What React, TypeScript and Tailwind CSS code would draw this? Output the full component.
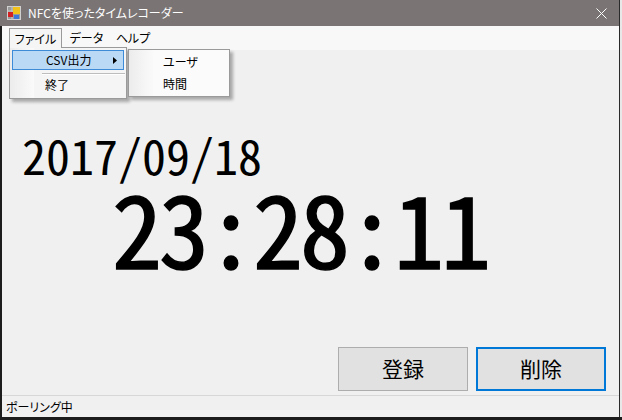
import React from 'react';

const ui = "font-['Noto_Sans_CJK_JP',sans-serif] [font-feature-settings:'palt']";
const digits = "font-['Noto_Sans_CJK_JP',sans-serif] [font-feature-settings:'hwid']";

function AppIcon() {
    return (
        <svg width="14" height="14" viewBox="0 0 14 14">
            <rect x="0.5" y="0.5" width="13" height="13" fill="#9a9a9a" stroke="#d0d0d0" />
            <line x1="0" y1="5" x2="14" y2="5" stroke="#c8c8c8" />
            <line x1="5" y1="0" x2="5" y2="14" stroke="#c8c8c8" />
            <rect x="1" y="6" width="5" height="5" fill="#d42020" />
            <rect x="6" y="1" width="7" height="7" fill="#f2c21b" />
            <rect x="7" y="9" width="5" height="4" fill="#3c78d8" />
        </svg>
    );
}

function CloseIcon() {
    return (
        <svg width="11" height="11" viewBox="0 0 11 11">
            <path d="M0.5 0.5 L10.5 10.5 M10.5 0.5 L0.5 10.5" stroke="#ffffff" strokeWidth="1" />
        </svg>
    );
}

export default function App() {
    return (
        <div className={`w-[622px] h-[420px] bg-[#1c1c1c] flex overflow-hidden ${ui}`}>
            <div className="relative w-[619px] h-[417px] flex flex-col">
                {/* Title bar */}
                <div className="h-[26px] bg-[#7a7574] flex items-center pl-[7px] pr-[12px] text-white text-[12px]">
                    <AppIcon />
                    <span className="ml-[7px]">NFCを使ったタイムレコーダー</span>
                    <div className="ml-auto flex items-center">
                        <CloseIcon />
                    </div>
                </div>

                <div className="flex-1 ml-[2px] flex flex-col">
                    {/* Menu bar */}
                    <div className="h-[24px] bg-[#f8f8f8] flex items-center pl-[7px] text-[12px] text-black">
                        <div className="w-[53px]" />
                        <div className="w-[49px] text-center">データ</div>
                        <div className="w-[44px] text-center">ヘルプ</div>
                    </div>

                    {/* Client area */}
                    <div className="flex-1 bg-[#f0f0f0] flex flex-col">
                        <div className={`pt-[80px] pl-[20px] text-[48px] leading-none text-black ${digits}`}>
                            2017/09/18
                        </div>
                        <div className={`mt-[8px] pl-[110px] text-[100px] leading-[80px] tracking-[-3px] font-normal text-black [-webkit-text-stroke:1.5px_#000] ${digits}`}>
                            23:28:11
                        </div>
                        <div className="mt-auto flex justify-end gap-2 pr-[13px] pb-[4px]">
                            <button className="w-[130px] h-[44px] bg-[#e1e1e1] border border-[#adadad] text-[21px] text-black">
                                登録
                            </button>
                            <button className="w-[130px] h-[44px] bg-[#e1e1e1] border-2 border-[#0078d7] text-[21px] text-black">
                                削除
                            </button>
                        </div>
                    </div>

                    {/* Status bar */}
                    <div className="h-[22px] bg-[#f0f0f0] border-t border-[#d7d7d7] flex items-center pl-[4px] text-[12px] text-black">
                        ポーリング中
                    </div>
                </div>

                {/* Open "ファイル" menu */}
                <div className="absolute left-[9px] top-[28px] w-[53px] h-[20px] z-10 bg-[#f5f5f5] border-x border-t border-[#9a9a9a] flex items-center justify-center text-[12px] text-black">
                    ファイル
                </div>
                <div className="absolute left-[9px] top-[47px] w-[118px] h-[52px] bg-[#f5f5f5] border border-[#9a9a9a] shadow-[3px_3px_3px_rgba(0,0,0,0.3)] text-[12px] text-black">
                    <div className="absolute left-0 top-0 bottom-0 w-[24px] bg-gradient-to-r from-[#ececec] to-[#fafafa]" />
                    <div className="relative mt-[2px] mx-[2px] h-[20px] bg-[#b9d9f5] border border-[#3c8ad8] flex items-center pl-[33px]">
                        CSV出力
                        <svg className="absolute left-[100px] top-[6px]" width="4" height="7" viewBox="0 0 4 7">
                            <path d="M0 0 L4 3.5 L0 7 Z" fill="#000" />
                        </svg>
                    </div>
                    <div className="relative ml-[32px] mr-[1px] mt-[3px] h-[2px] border-t border-[#bdbdbd] border-b border-b-white" />
                    <div className="relative h-[20px] flex items-center pl-[35px]">終了</div>
                </div>

                {/* Submenu */}
                <div className="absolute left-[128px] top-[49px] w-[102px] h-[48px] bg-[#fbfbfb] border border-[#9a9a9a] shadow-[3px_3px_3px_rgba(0,0,0,0.3)] text-[12px] text-black">
                    <div className="absolute left-0 top-0 bottom-0 w-[24px] bg-gradient-to-r from-[#ececec] to-[#fafafa]" />
                    <div className="relative mt-[2px] h-[20px] flex items-center pl-[34px]">ユーザ</div>
                    <div className="relative mt-[2px] h-[20px] flex items-center pl-[34px]">時間</div>
                </div>
            </div>
            <div className="w-[3px] h-[417px] bg-[#e8e8e8] border-l border-[#2a2a2a]" />
        </div>
    );
}
